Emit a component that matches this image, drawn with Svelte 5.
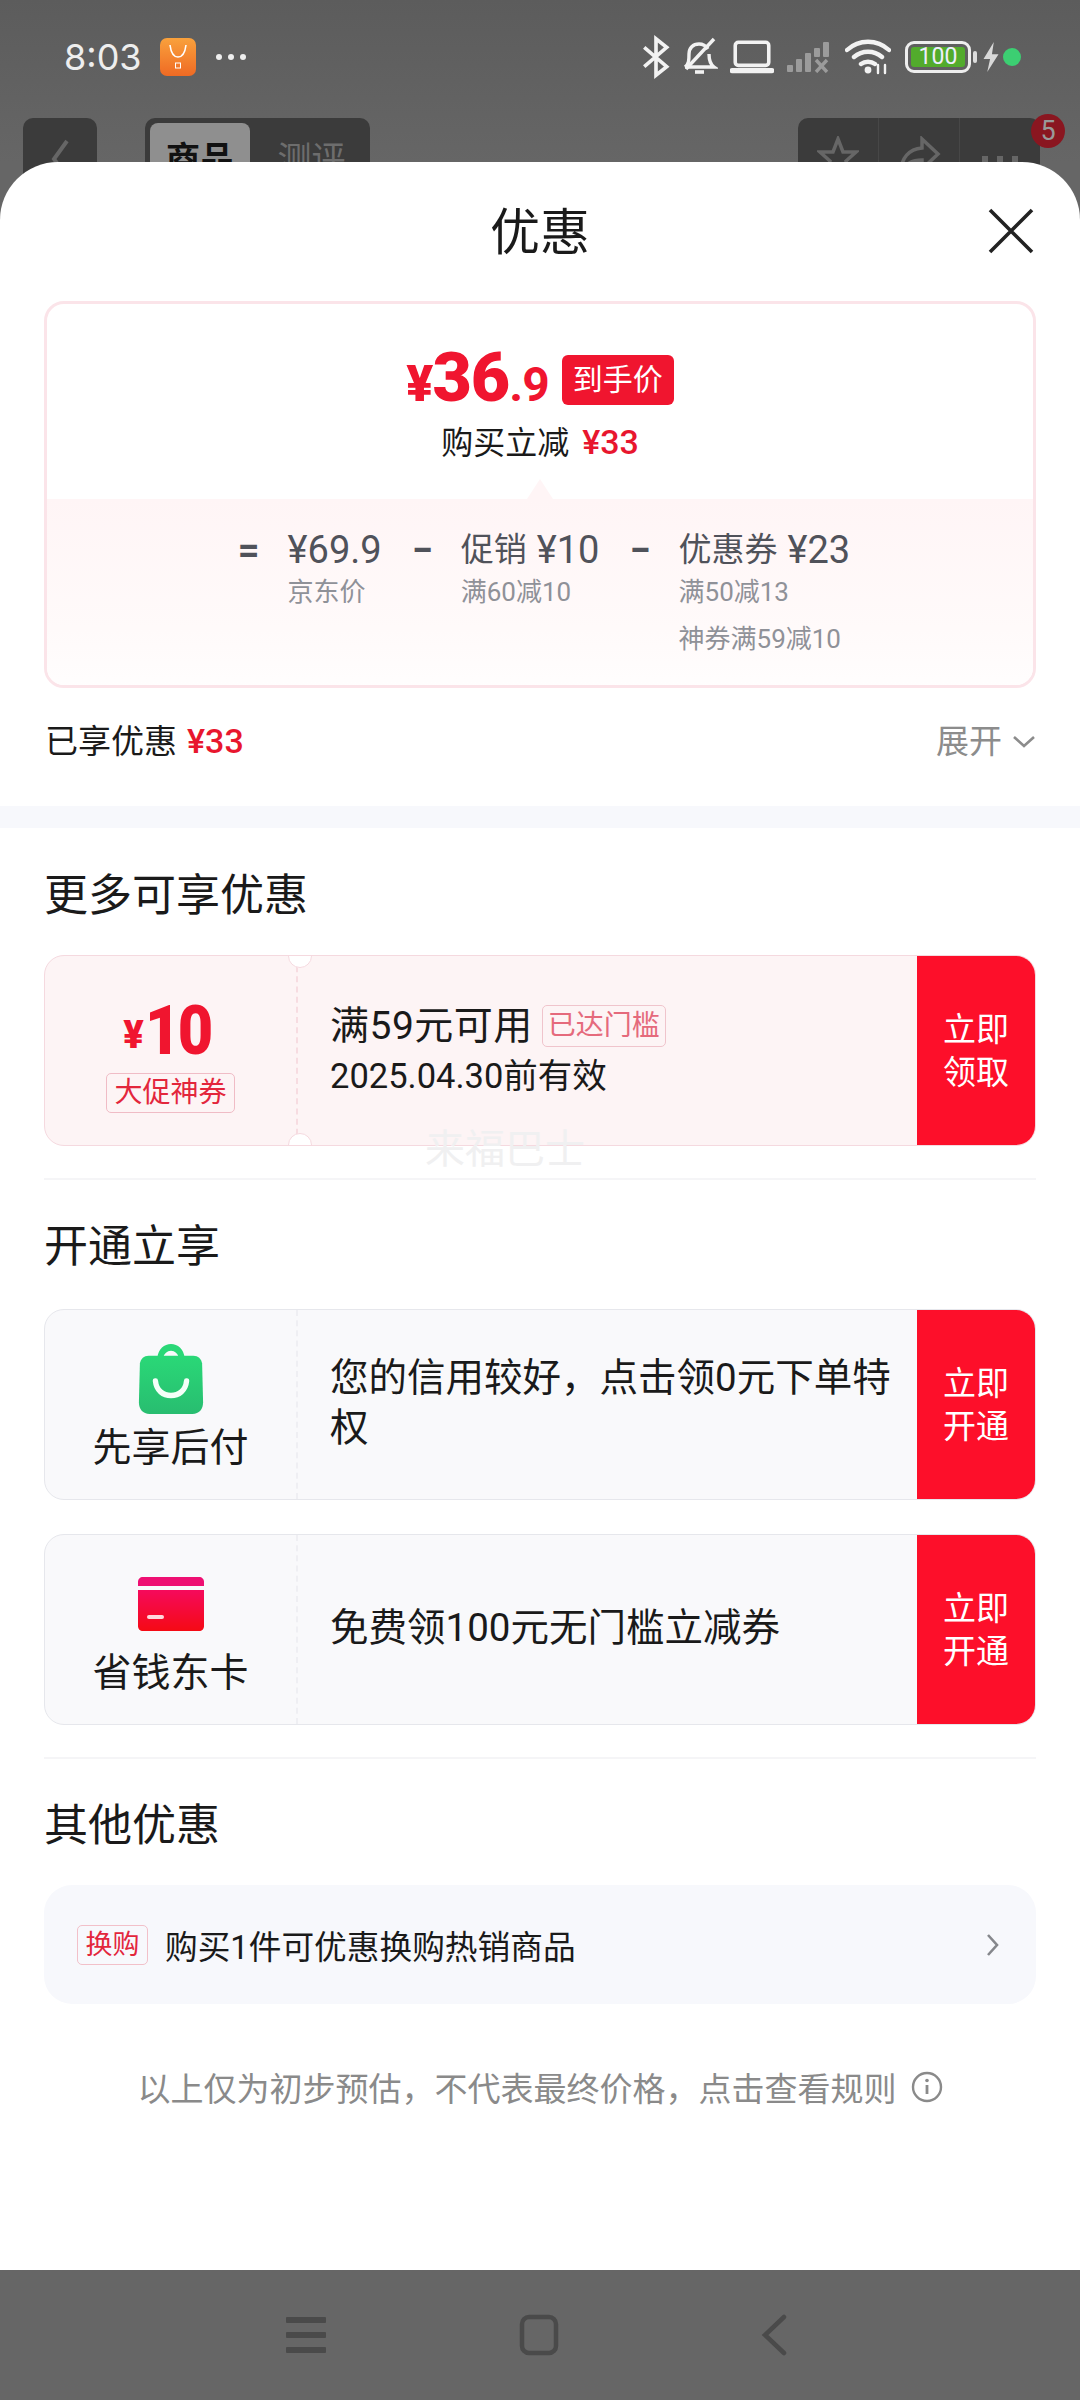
<script>
  const breakdown = [
    { op: '=', label: '', amount: '¥69.9', notes: ['京东价'] },
    { op: '−', label: '促销', amount: '¥10', notes: ['满60减10'] },
    { op: '−', label: '优惠券', amount: '¥23', notes: ['满50减13', '神券满59减10'] }
  ];
</script>

<div class="page">
  <div class="backdrop">
    <div class="status">
      <span class="time">8:03</span>
      <svg class="app" viewBox="0 0 36 38" width="36" height="38">
        <defs>
          <linearGradient id="appfill" x1="0" y1="0" x2="0" y2="1">
            <stop offset="0" stop-color="#f9a13c" />
            <stop offset="1" stop-color="#ef6a24" />
          </linearGradient>
        </defs>
        <rect width="36" height="38" rx="7" fill="url(#appfill)" />
        <path d="M10 7c1 8 4 12 8 12s7-4 8-12" fill="none" stroke="#fff" stroke-width="1.6" />
        <rect x="15.5" y="25" width="5" height="5" fill="none" stroke="#fff" stroke-width="1" />
      </svg>
      <span class="dots"><i></i><i></i><i></i></span>
      <span class="grow"></span>
      <svg class="bt" width="30" height="44" viewBox="0 0 28 38" fill="none" stroke="#f2f2f2" stroke-width="3.4">
        <path d="M3 10l21 18-10 8V2l10 8L3 28" />
      </svg>
      <svg class="bell" width="38" height="40" viewBox="0 0 38 40" fill="none" stroke="#f2f2f2" stroke-width="3.4">
        <path d="M5 30c4-3 4-7 4-13 0-6 4-10 10-10 4 0 7 2 9 5M29 17c0 6 1 10 5 13H5" />
        <path d="M34 2L6 32" />
        <path d="M15 35h9" stroke-width="3.6" />
      </svg>
      <svg class="laptop" width="44" height="34" viewBox="0 0 42 32" fill="none" stroke="#f2f2f2" stroke-width="3.4">
        <rect x="5" y="2" width="32" height="22" rx="3" />
        <path d="M2 29h38" stroke-width="4.8" stroke-linecap="round" />
      </svg>
      <svg class="signal" width="46" height="32" viewBox="0 0 44 32" fill="#9b9b9b">
        <rect x="0" y="24" width="6" height="7" rx="1" />
        <rect x="9" y="18" width="6" height="13" rx="1" />
        <rect x="18" y="12" width="6" height="19" rx="1" />
        <rect x="27" y="7" width="6" height="9" rx="1" />
        <rect x="36" y="1" width="6" height="15" rx="1" />
        <path d="M29 19l11 12M40 19L29 31" stroke="#9b9b9b" stroke-width="3.4" fill="none" />
      </svg>
      <svg class="wifi" width="46" height="36" viewBox="0 0 46 36" fill="none" stroke="#f2f2f2" stroke-width="4.4" stroke-linecap="round">
        <path d="M2 11c12-11 30-11 42 0M9 18c8-7 20-7 28 0M16 25c4-3 10-3 14 0" />
        <circle cx="23" cy="31" r="3.4" fill="#f2f2f2" stroke="none" />
        <path d="M33 26v8M40 26v8" stroke-width="2.4" />
      </svg>
      <span class="battery"><b>100</b></span>
      <span class="nub"></span>
      <svg class="bolt" width="18" height="30" viewBox="0 0 18 32" fill="#d8d8d8"><path d="M12 0L1 18h7l-3 14 12-19h-7z" /></svg>
      <span class="dot"></span>
    </div>

    <div class="nav">
      <div class="back">
        <svg width="20" height="42" viewBox="0 0 20 42" fill="none" stroke="#666" stroke-width="4"><path d="M17 3L4 21l13 18" /></svg>
      </div>
      <div class="tabs">
        <span class="tab on">商品</span>
        <span class="tab">测评</span>
      </div>
      <span class="grow"></span>
      <div class="tools">
        <span class="tool">
          <svg width="42" height="42" viewBox="0 0 42 42" fill="none" stroke="#666" stroke-width="3.5"><path d="M21 3l5 13h13l-10 9 4 14-12-8-12 8 4-14L3 16h13z" /></svg>
        </span>
        <span class="tool">
          <svg width="44" height="42" viewBox="0 0 44 42" fill="none" stroke="#666" stroke-width="3.5"><path d="M25 3l16 15-16 15v-9C14 24 8 28 4 36c0-14 8-23 21-24z" /></svg>
        </span>
        <span class="tool more"><i></i><i></i><i></i></span>
        <span class="count">5</span>
      </div>
    </div>
  </div>

  <div class="sheet">
    <header class="head">
      <h1>优惠</h1>
      <svg class="close" width="46" height="46" viewBox="0 0 46 46" fill="none" stroke="#222" stroke-width="3.6"><path d="M2 2l42 42M44 2L2 44" /></svg>
    </header>

    <div class="price-card">
      <div class="price-top">
        <div class="price-line">
          <span class="price"><small>¥</small>36<em>.9</em></span>
          <span class="final">到手价</span>
        </div>
        <div class="save">购买立减<b>¥33</b></div>
        <span class="caret"></span>
      </div>
      <div class="price-sum">
        {#each breakdown as part}
          <span class="op">{part.op}</span>
          <div class="part">
            <div class="part-title">
              {#if part.label}<span class="part-label">{part.label}</span>{/if}
              <span>{part.amount}</span>
            </div>
            {#each part.notes as note}
              <div class="part-note">{note}</div>
            {/each}
          </div>
        {/each}
      </div>
    </div>

    <div class="enjoyed">
      <span>已享优惠<b>¥33</b></span>
      <span class="expand">
        展开
        <svg width="24" height="14" viewBox="0 0 24 14" fill="none" stroke="#8c8c8c" stroke-width="2.6"><path d="M2 2l10 9 10-9" /></svg>
      </span>
    </div>

    <div class="band"></div>

    <section class="block first">
      <h2>更多可享优惠</h2>
      <div class="ticket red">
        <div class="stub">
          <div class="amount"><small>¥</small><span>10</span></div>
          <span class="stub-tag">大促神券</span>
        </div>
        <div class="info">
          <div class="info-line">满59元可用<span class="reached">已达门槛</span></div>
          <div class="info-line">2025.04.30前有效</div>
        </div>
        <div class="cta">立即<br />领取</div>
        <span class="notch top"></span>
        <span class="notch bottom"></span>
      </div>
      <span class="watermark">来福巴士</span>
    </section>

    <section class="block ruled">
      <h2>开通立享</h2>
      <div class="ticket grey">
        <div class="stub labelled">
          <svg class="bag" width="66" height="70" viewBox="0 0 66 72">
            <defs>
              <linearGradient id="bagfill" x1="0" y1="0" x2="0" y2="1">
                <stop offset="0" stop-color="#2ad877" />
                <stop offset="1" stop-color="#28bd70" />
              </linearGradient>
            </defs>
            <path d="M19 14C20 5 26 0 33 0s13 5 14 14h-6c-1-4-4-7-8-7s-7 3-8 7z" fill="#2ad877" />
            <path d="M10 12h46c5 0 8 3 9 8l1 40c0 7-4 12-11 12H11C4 72 0 67 0 60l1-40c1-5 4-8 9-8z" fill="url(#bagfill)" />
            <path d="M17 38c1 10 8 15 16 15s15-5 16-15" fill="none" stroke="#f4fff8" stroke-width="5.5" stroke-linecap="round" />
          </svg>
          <div class="stub-name">先享后付</div>
        </div>
        <div class="info"><div class="info-text">您的信用较好，点击领0元下单特权</div></div>
        <div class="cta">立即<br />开通</div>
      </div>
      <div class="ticket grey">
        <div class="stub labelled">
          <svg class="card" width="66" height="54" viewBox="0 0 66 54">
            <defs>
              <linearGradient id="cardfill" x1="0" y1="0" x2="0" y2="1">
                <stop offset="0" stop-color="#f50a5c" />
                <stop offset="1" stop-color="#f50a14" />
              </linearGradient>
            </defs>
            <path d="M5 0h56c3 0 5 2 5 5v4H0V5c0-3 2-5 5-5z" fill="#ee0f72" />
            <path d="M0 13h66v36c0 3-2 5-5 5H5c-3 0-5-2-5-5z" fill="url(#cardfill)" />
            <rect x="9" y="38" width="17" height="4" rx="2" fill="#ffd9dc" />
          </svg>
          <div class="stub-name">省钱东卡</div>
        </div>
        <div class="info"><div class="info-text">免费领100元无门槛立减券</div></div>
        <div class="cta">立即<br />开通</div>
      </div>
    </section>

    <section class="block ruled">
      <h2>其他优惠</h2>
      <div class="swap">
        <span class="swap-tag">换购</span>
        <span class="swap-text">购买1件可优惠换购热销商品</span>
        <svg width="14" height="24" viewBox="0 0 14 24" fill="none" stroke="#85878c" stroke-width="2.6"><path d="M2 2l9 10-9 10" /></svg>
      </div>
    </section>

    <div class="foot">
      以上仅为初步预估，不代表最终价格，点击查看规则
      <svg width="32" height="32" viewBox="0 0 32 32" fill="none" stroke="#8a8a8a" stroke-width="2.4">
        <circle cx="16" cy="16" r="14" />
        <path d="M16 14v9" stroke-width="2.8" />
        <circle cx="16" cy="9.5" r="1.8" fill="#8a8a8a" stroke="none" />
      </svg>
    </div>
  </div>

  <div class="softkeys">
    <svg width="40" height="40" viewBox="0 0 40 40" fill="#4a4a4a">
      <rect y="2" width="40" height="6" rx="1" />
      <rect y="17" width="40" height="6" rx="1" />
      <rect y="32" width="40" height="6" rx="1" />
    </svg>
    <svg width="40" height="42" viewBox="0 0 40 42" fill="none" stroke="#4a4a4a" stroke-width="4.5"><rect x="3" y="3" width="34" height="36" rx="7" /></svg>
    <svg class="soft-back" width="28" height="42" viewBox="0 0 28 42" fill="none" stroke="#4a4a4a" stroke-width="4.5" stroke-linecap="round"><path d="M25 3L6 21l19 18" /></svg>
  </div>
</div>

<style>
  :global(body) {
    margin: 0;
    background: #666;
  }

  .page {
    display: flex;
    flex-direction: column;
    width: 1080px;
    height: 2400px;
    overflow: hidden;
    background: #666;
    color: #1a1a1a;
    font-family: Roboto, "Noto Sans CJK SC", sans-serif;
  }

  .grow {
    flex: 1;
  }

  /* dimmed page behind the sheet */
  .backdrop {
    height: 162px;
    flex: none;
    background: linear-gradient(#5c5c5c, #666);
  }

  .status {
    display: flex;
    align-items: center;
    height: 38px;
    padding: 38px 59px 0 64px;
  }

  .time {
    font-family: Inter, Roboto, sans-serif;
    font-size: 36px;
    color: #eee;
    margin-right: 18px;
  }

  .dots {
    display: flex;
    gap: 6px;
    margin-left: 20px;
  }

  .dots i {
    width: 6px;
    height: 6px;
    border-radius: 50%;
    background: #eee;
  }

  .bell {
    margin-left: 9px;
  }

  .laptop {
    margin-left: 12px;
  }

  .signal {
    margin-left: 12px;
  }

  .wifi {
    margin-left: 13px;
  }

  .battery {
    display: flex;
    box-sizing: border-box;
    width: 66px;
    height: 32px;
    margin-left: 14px;
    padding: 3px;
    border: 3px solid #eee;
    border-radius: 9px;
  }

  .battery b {
    flex: 1;
    border-radius: 3px;
    background: #52ab2c;
    color: #eef;
    font-size: 23px;
    font-weight: 400;
    line-height: 20px;
    text-align: center;
  }

  .nub {
    width: 4px;
    height: 12px;
    margin-left: 2px;
    border-radius: 2px;
    background: #ddd;
  }

  .bolt {
    margin-left: 5px;
  }

  .dot {
    width: 18px;
    height: 18px;
    margin-left: 3px;
    border-radius: 50%;
    background: #3ccf72;
  }

  .nav {
    display: flex;
    height: 100px;
    margin-top: 42px;
    padding: 0 40px 0 23px;
  }

  .back {
    display: flex;
    justify-content: center;
    box-sizing: border-box;
    width: 74px;
    height: 100px;
    padding-top: 20px;
    border-radius: 10px;
    background: #3b3b3b;
  }

  .tabs {
    display: flex;
    box-sizing: border-box;
    width: 225px;
    height: 100px;
    margin-left: 48px;
    padding: 5px;
    border-radius: 10px;
    background: #3b3b3b;
  }

  .tab {
    flex: 1;
    padding: 9px 0 0 8px;
    border-radius: 8px;
    color: #6d6d6d;
    font-size: 34px;
    text-align: center;
  }

  .tab.on {
    flex: none;
    width: 100px;
    padding-left: 0;
    background: #8f8f8f;
    color: #111;
    font-weight: 700;
  }

  .tools {
    position: relative;
    display: flex;
    width: 242px;
    height: 100px;
    border-radius: 10px;
    background: #3b3b3b;
  }

  .tool {
    display: flex;
    justify-content: center;
    width: 80px;
    padding-top: 18px;
    border-right: 1px solid #474747;
  }

  .tool.more {
    gap: 9px;
    padding-top: 38px;
    border: 0;
  }

  .tool.more i {
    width: 6px;
    height: 6px;
    background: #666;
  }

  .count {
    position: absolute;
    top: -4px;
    right: -25px;
    width: 34px;
    height: 34px;
    border-radius: 50%;
    background: #8a1620;
    color: #999;
    font-size: 27px;
    line-height: 34px;
    text-align: center;
  }

  /* bottom sheet */
  .sheet {
    position: relative;
    z-index: 1;
    display: flex;
    flex-direction: column;
    height: 2108px;
    flex: none;
    overflow: hidden;
    border-radius: 58px 58px 0 0;
    background: #fff;
  }

  .head {
    position: relative;
    flex: none;
    height: 139px;
  }

  .head h1 {
    margin: 0;
    padding-top: 36px;
    font-size: 50px;
    font-weight: 400;
    line-height: 70px;
    text-align: center;
  }

  .close {
    position: absolute;
    top: 46px;
    right: 46px;
  }

  .price-card {
    box-sizing: border-box;
    flex: none;
    height: 387px;
    margin: 0 44px;
    overflow: hidden;
    border: 3px solid #fbe4e9;
    border-radius: 20px;
  }

  .price-top {
    position: relative;
    box-sizing: border-box;
    height: 195px;
    padding-top: 50px;
    text-align: center;
  }

  .price-line {
    display: flex;
    justify-content: center;
    align-items: center;
    gap: 13px;
    height: 54px;
  }

  .price {
    color: #f0152f;
    font-size: 68px;
    font-weight: 900;
    line-height: 54px;
    letter-spacing: -1px;
  }

  .price small {
    font-size: 50px;
  }

  .price em {
    font-size: 48px;
    font-style: normal;
    font-weight: 700;
  }

  .final {
    width: 112px;
    height: 50px;
    margin-top: -2px;
    border-radius: 6px;
    background: #f0152f;
    color: #fff;
    font-size: 30px;
    line-height: 50px;
    text-align: center;
  }

  .save {
    margin-top: 12px;
    font-size: 32px;
    line-height: 44px;
  }

  .save b,
  .enjoyed b {
    margin-left: 13px;
    color: #e8162e;
    font-size: 34px;
    font-weight: 500;
  }

  .enjoyed b {
    margin-left: 10px;
  }

  .caret {
    position: absolute;
    left: 480px;
    bottom: 0;
    width: 0;
    height: 0;
    border: 13px solid transparent;
    border-top: 0;
    border-bottom: 20px solid #fff5f6;
  }

  .price-sum {
    display: flex;
    justify-content: center;
    height: 190px;
    padding: 26px 0 0 38px;
    background: linear-gradient(#fff5f6, #fffafa 60%, #fff);
  }

  .op {
    margin-right: 28px;
    color: #50525a;
    font-size: 38px;
    font-weight: 700;
    line-height: 50px;
  }

  .part {
    margin-right: 30px;
    color: #50525a;
  }

  .part-title {
    display: flex;
    gap: 10px;
    font-size: 38px;
    line-height: 50px;
  }

  .part-label {
    font-size: 33px;
  }

  .part-note {
    color: #8f9198;
    font-size: 26px;
    line-height: 47px;
  }

  .part-title + .part-note {
    margin-top: -6px;
  }

  .enjoyed {
    display: flex;
    flex: none;
    justify-content: space-between;
    align-items: center;
    height: 118px;
    padding: 0 44px 17px 45px;
    box-sizing: border-box;
    font-size: 33px;
  }

  .expand {
    display: flex;
    align-items: center;
    gap: 10px;
    color: #8c8c8c;
  }

  .expand svg {
    margin-top: 6px;
  }

  .band {
    flex: none;
    height: 22px;
    background: #f7f8fc;
  }

  .block {
    position: relative;
    display: flex;
    flex-direction: column;
    flex: none;
    gap: 34px;
    margin: 0 44px;
  }

  .block h2 {
    margin: 0 0 -3px;
    padding-top: 36px;
    font-size: 44px;
    font-weight: 400;
    line-height: 62px;
  }

  .block.first h2 {
    margin-bottom: -6px;
    padding-top: 37px;
  }

  .block.ruled {
    margin-top: 32px;
    border-top: 2px solid #f5f5f7;
  }

  .ticket {
    position: relative;
    display: flex;
    box-sizing: border-box;
    height: 191px;
    overflow: hidden;
    border: 1px solid #e6e7ec;
    border-radius: 20px;
    background: #f9f9fb;
  }

  .ticket.red {
    border-color: #f5d9df;
    background: #fdf4f5;
  }

  .stub {
    display: flex;
    flex-direction: column;
    flex: none;
    align-items: center;
    justify-content: center;
    box-sizing: border-box;
    width: 253px;
    border-right: 2px dashed #efeff3;
  }

  .stub.labelled {
    justify-content: flex-end;
    padding-bottom: 25px;
  }

  .ticket.red .stub {
    border-right-color: #f7dce1;
  }

  .bag {
    margin-bottom: 8px;
  }

  .card {
    margin-bottom: 16px;
  }

  .amount {
    display: flex;
    align-items: flex-end;
    margin-top: 12px;
    color: #f0152f;
    font-size: 68px;
    font-weight: 900;
    line-height: 62px;
    letter-spacing: -3px;
  }

  .amount span {
    margin-left: -2px;
    transform: scaleX(0.9);
    transform-origin: left;
  }

  .amount small {
    margin-right: 3px;
    font-size: 38px;
    line-height: 54px;
    letter-spacing: 0;
  }

  .stub-tag {
    margin-top: 11px;
    padding: 0 7px;
    border: 1px solid #f0bcc6;
    border-radius: 5px;
    color: #e3263c;
    font-size: 28px;
    line-height: 38px;
  }

  .stub-name {
    font-size: 39px;
    line-height: 52px;
  }

  .info {
    display: flex;
    flex: 1;
    flex-direction: column;
    justify-content: center;
    min-width: 0;
    padding: 0 20px 4px 32px;
  }

  .ticket.red .info {
    padding-bottom: 0;
  }

  .info-line {
    display: flex;
    align-items: center;
    font-size: 34.5px;
    line-height: 50px;
  }

  .info-line:first-child {
    font-size: 39px;
    letter-spacing: 0.5px;
  }

  .reached {
    margin-left: 9px;
    padding: 0 5px;
    border: 1px solid #f0c4cc;
    border-radius: 5px;
    color: #e56a7c;
    font-size: 28px;
    line-height: 40px;
    letter-spacing: 0;
  }

  .info-text {
    font-size: 38.5px;
    line-height: 50px;
  }

  .cta {
    display: flex;
    flex: none;
    align-items: center;
    justify-content: center;
    width: 118px;
    background: #fd0f2a;
    color: #fff;
    font-size: 33px;
    line-height: 43px;
    text-align: center;
  }

  .notch {
    position: absolute;
    left: 243px;
    width: 22px;
    height: 22px;
    border: 1px solid #f5d9df;
    border-radius: 50%;
    background: #fff;
  }

  .notch.top {
    top: -12px;
  }

  .notch.bottom {
    bottom: -12px;
  }

  .watermark {
    position: absolute;
    left: 381px;
    top: 300px;
    color: #f0f0f1;
    font-size: 40px;
    line-height: 44px;
  }

  .swap {
    display: flex;
    align-items: center;
    box-sizing: border-box;
    height: 119px;
    margin-top: -3px;
    padding: 0 36px 0 33px;
    border-radius: 28px;
    background: #f7f8fc;
  }

  .swap-tag {
    flex: none;
    width: 69px;
    border: 1px solid #f2c0c9;
    border-radius: 5px;
    color: #e3263c;
    font-size: 27px;
    line-height: 38px;
    text-align: center;
  }

  .swap-text {
    flex: 1;
    margin-left: 17px;
    font-size: 32.7px;
  }

  .foot {
    display: flex;
    align-items: center;
    justify-content: center;
    gap: 14px;
    height: 48px;
    margin-top: 59px;
    color: #8a8a8a;
    font-size: 33px;
  }

  .softkeys {
    display: flex;
    align-items: center;
    gap: 193px;
    height: 130px;
    padding-left: 286px;
    box-sizing: border-box;
    background: #666;
  }

  .soft-back {
    margin-left: 7px;
  }
</style>
